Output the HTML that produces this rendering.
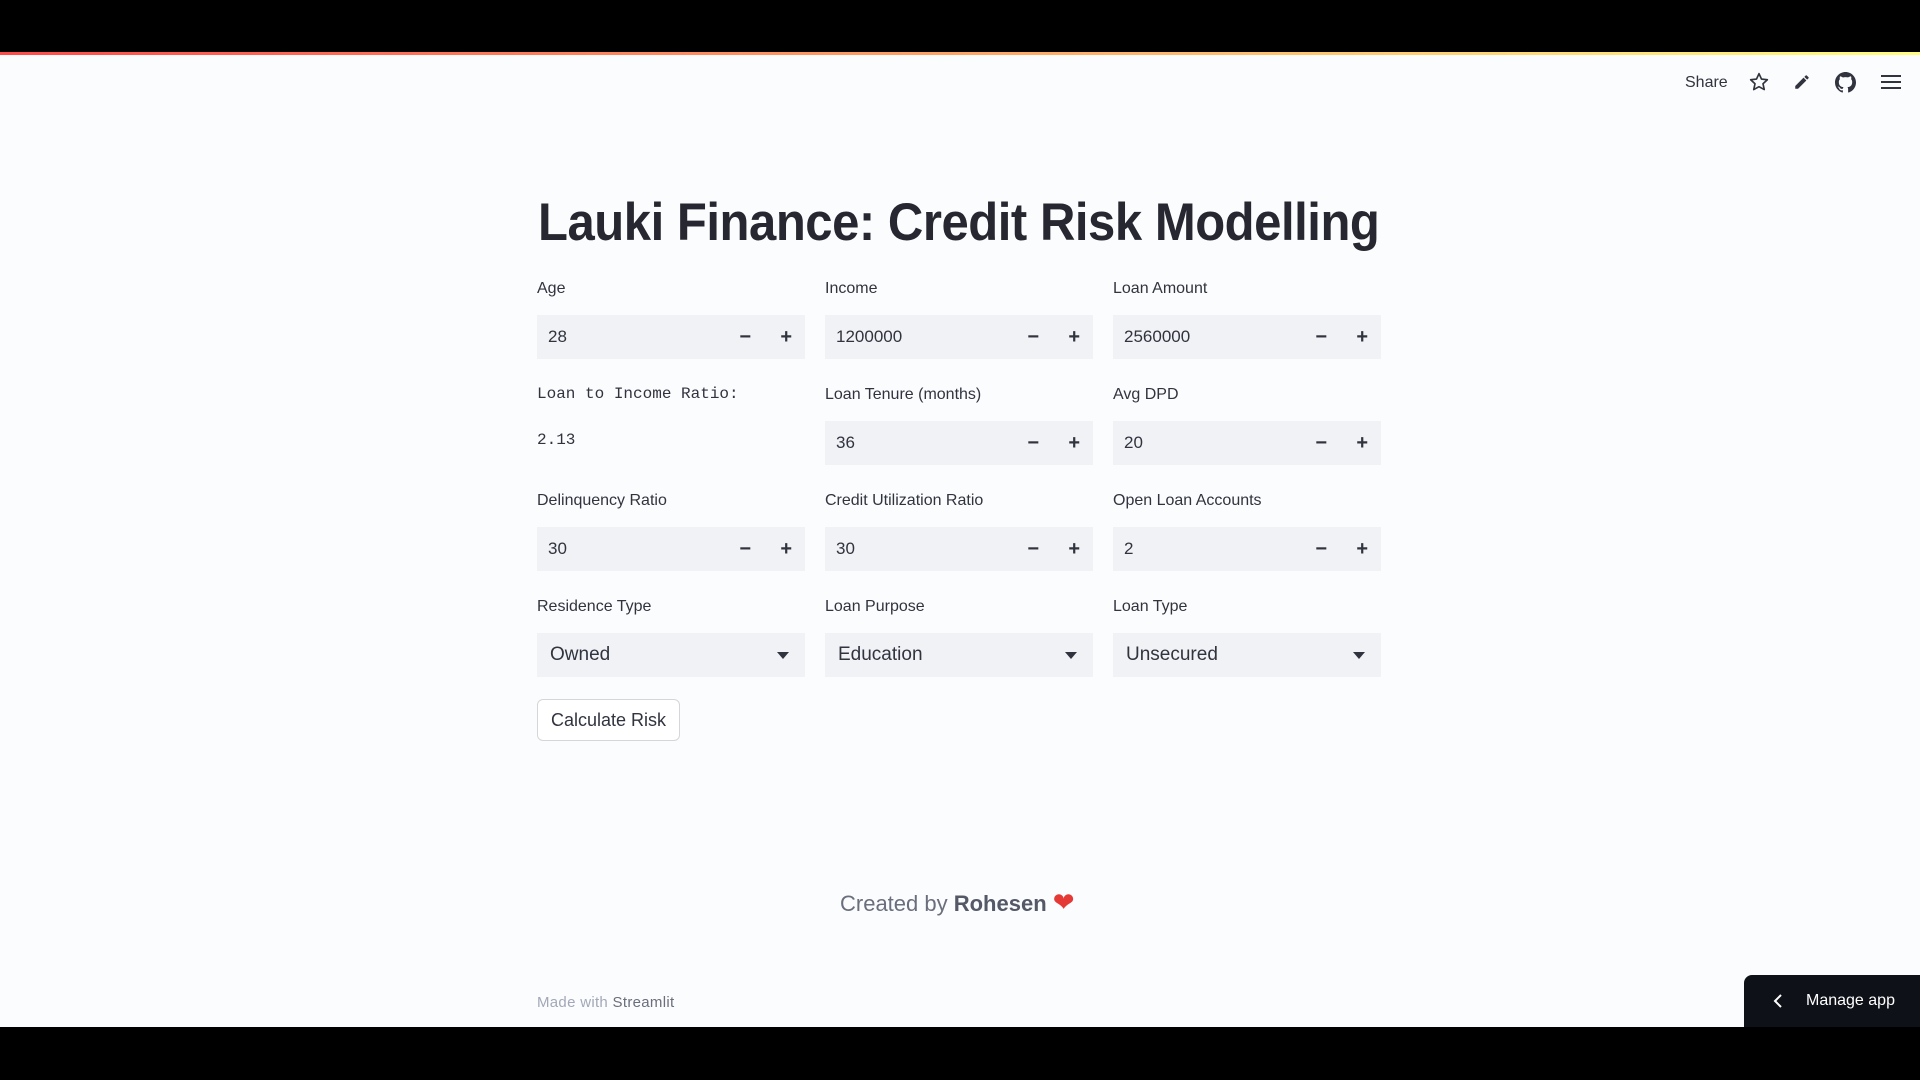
<!DOCTYPE html>
<html><head><meta charset="utf-8"><style>
*{box-sizing:border-box;margin:0;padding:0}
body{width:1920px;height:1080px;background:#fbfcfd;font-family:"Liberation Sans",sans-serif;color:#31333f;position:relative;overflow:hidden}
.top{position:absolute;left:0;top:0;width:1920px;height:52px;background:#000}
.grad{position:absolute;left:0;top:52px;width:1920px;height:3px;background:linear-gradient(90deg,#ff4b4b,#fffd80)}
.bot{position:absolute;left:0;top:1027px;width:1920px;height:53px;background:#000}
.abs{position:absolute}
h1{position:absolute;left:538px;top:192px;font-size:53px;font-weight:bold;letter-spacing:-0.5px;color:#262730;white-space:nowrap;transform:scaleX(0.925);transform-origin:0 0}
.lbl{position:absolute;font-size:16px;color:#31333f}
.inp{position:absolute;width:268px;height:44px;background:#f0f2f6;font-size:17px;line-height:44px;padding-left:11px}
.inp .m{position:absolute;right:54px;top:0;font-size:20px;font-weight:bold}
.inp .p{position:absolute;right:13px;top:0;font-size:20px;font-weight:bold}
.sel{position:absolute;width:268px;height:44px;background:#f0f2f6;font-size:19px;line-height:44px;padding-left:13px}
.sel:after{content:"";position:absolute;right:16px;top:19px;border-left:6px solid transparent;border-right:6px solid transparent;border-top:7px solid #31333f}
.mono{position:absolute;font-family:"Liberation Mono",monospace;font-size:16px;color:#31333f}
</style></head><body>
<div class="top"></div><div class="grad"></div><div class="bot"></div>
<div class="abs" style="left:1685px;top:74px;font-size:16px">Share</div>
<svg class="abs" style="left:1749px;top:72px" width="20" height="20" viewBox="0 0 24 24" fill="none" stroke="#31333f" stroke-width="2"><path d="M12 2l3 6.5 7 .8-5.2 4.8 1.5 7L12 17.6 5.7 21.1l1.5-7L2 9.3l7-.8z" stroke-linejoin="round"/></svg>
<svg class="abs" style="left:1793px;top:73px" width="18" height="18" viewBox="0 0 24 24" fill="#31333f"><path d="M3 17.25V21h3.75L17.8 9.94l-3.75-3.75zM20.7 7.04a1 1 0 000-1.41l-2.34-2.34a1 1 0 00-1.41 0l-1.83 1.83 3.75 3.75z"/></svg>
<svg class="abs" style="left:1835px;top:72px" width="21" height="21" viewBox="0 0 16 16" fill="#31333f"><path d="M8 0C3.58 0 0 3.580 0 8c0 3.54 2.29 6.53 5.47 7.59.4.07.55-.17.55-.38v-1.33c-2.23.48-2.7-1.07-2.7-1.07-.36-.92-.89-1.17-.89-1.17-.73-.5.06-.49.06-.49.8.06 1.23.83 1.23.83.72 1.22 1.87.87 2.33.66.07-.52.28-.87.51-1.07-1.78-.2-3.64-.89-3.64-3.95 0-.87.31-1.59.82-2.15-.08-.2-.36-1.02.08-2.12 0 0 .67-.21 2.2.82A7.6 7.6 0 018 3.86c.68 0 1.36.09 2 .27 1.53-1.04 2.2-.82 2.2-.82.44 1.1.16 1.92.08 2.12.51.56.82 1.27.82 2.15 0 3.07-1.87 3.75-3.65 3.95.29.25.54.73.54 1.48v2.2c0 .21.15.46.55.38A8 8 0 0016 8c0-4.42-3.58-8-8-8z"/></svg>
<svg class="abs" style="left:1881px;top:73px" width="20" height="18" viewBox="0 0 20 18" fill="#31333f"><rect y="2" width="20" height="2"/><rect y="8" width="20" height="2"/><rect y="14" width="20" height="2"/></svg>

<h1>Lauki Finance: Credit Risk Modelling</h1>

<div class="lbl" style="left:537px;top:280px">Age</div>
<div class="lbl" style="left:825px;top:280px">Income</div>
<div class="lbl" style="left:1113px;top:280px">Loan Amount</div>
<div class="inp" style="left:537px;top:315px">28<span class="m">−</span><span class="p">+</span></div>
<div class="inp" style="left:825px;top:315px">1200000<span class="m">−</span><span class="p">+</span></div>
<div class="inp" style="left:1113px;top:315px">2560000<span class="m">−</span><span class="p">+</span></div>

<div class="mono" style="left:537px;top:385px">Loan to Income Ratio:</div>
<div class="mono" style="left:537px;top:431px">2.13</div>
<div class="lbl" style="left:825px;top:386px">Loan Tenure (months)</div>
<div class="lbl" style="left:1113px;top:386px">Avg DPD</div>
<div class="inp" style="left:825px;top:421px">36<span class="m">−</span><span class="p">+</span></div>
<div class="inp" style="left:1113px;top:421px">20<span class="m">−</span><span class="p">+</span></div>

<div class="lbl" style="left:537px;top:492px">Delinquency Ratio</div>
<div class="lbl" style="left:825px;top:492px">Credit Utilization Ratio</div>
<div class="lbl" style="left:1113px;top:492px">Open Loan Accounts</div>
<div class="inp" style="left:537px;top:527px">30<span class="m">−</span><span class="p">+</span></div>
<div class="inp" style="left:825px;top:527px">30<span class="m">−</span><span class="p">+</span></div>
<div class="inp" style="left:1113px;top:527px">2<span class="m">−</span><span class="p">+</span></div>

<div class="lbl" style="left:537px;top:598px">Residence Type</div>
<div class="lbl" style="left:825px;top:598px">Loan Purpose</div>
<div class="lbl" style="left:1113px;top:598px">Loan Type</div>
<div class="sel" style="left:537px;top:633px">Owned</div>
<div class="sel" style="left:825px;top:633px">Education</div>
<div class="sel" style="left:1113px;top:633px">Unsecured</div>

<div class="abs" style="left:537px;top:699px;width:143px;height:42px;border:1px solid #d6d6d9;border-radius:6px;background:#fff;font-size:18px;line-height:40px;text-align:center">Calculate Risk</div>

<div class="abs" style="left:840px;top:891px;font-size:22px;color:#6b6e7c">Created by <b style="color:#555867">Rohesen</b> <span style="color:#e53935;font-size:26px;line-height:22px">&#10084;</span></div>

<div class="abs" style="left:537px;top:994px;font-size:15px;color:#a3a8b8;letter-spacing:0.3px">Made with <span style="color:#6b6e7c">Streamlit</span></div>

<div class="abs" style="left:1744px;top:975px;width:176px;height:52px;background:#0e1117;border-radius:8px 0 0 0;color:#fff;font-size:16px;line-height:52px;padding-left:62px">Manage app</div>
<svg class="abs" style="left:1772px;top:993px" width="12" height="16" viewBox="0 0 12 16" fill="none" stroke="#fff" stroke-width="2"><path d="M9 2L3 8l6 6"/></svg>
</body></html>
